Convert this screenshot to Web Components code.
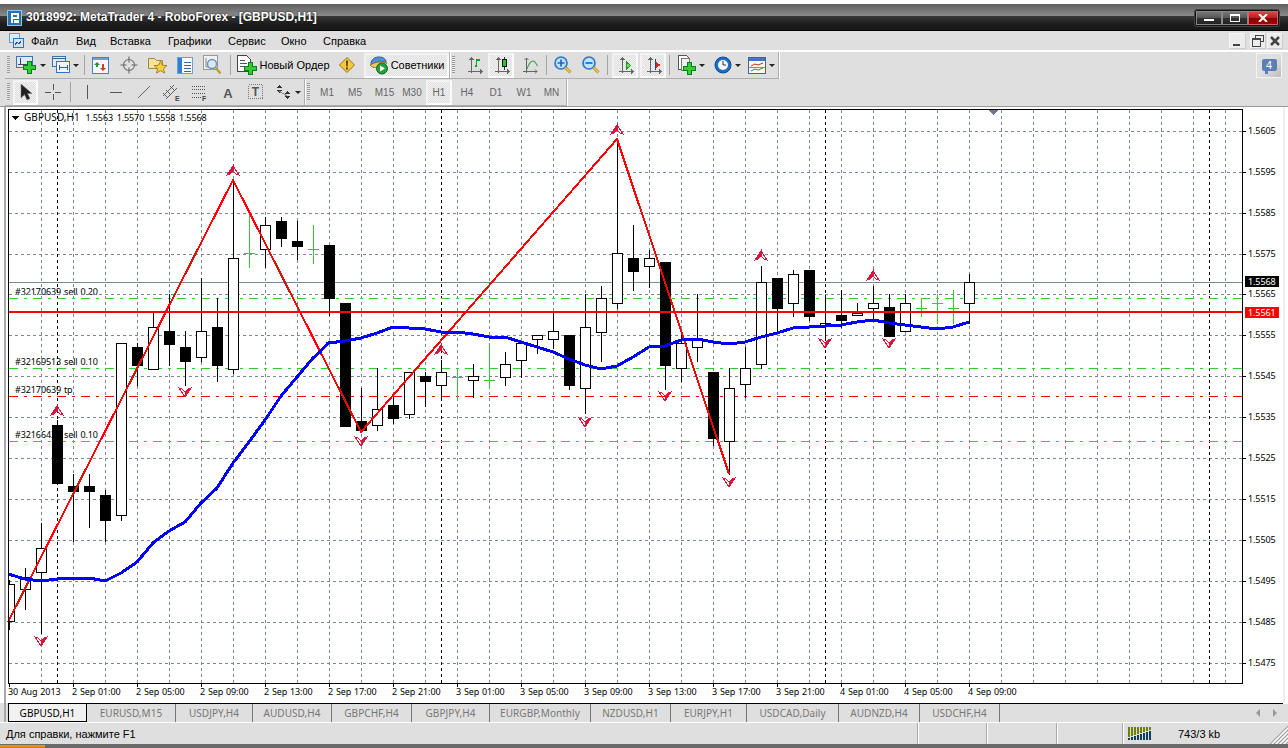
<!DOCTYPE html>
<html lang="ru"><head><meta charset="utf-8"><title>MetaTrader 4</title>
<style>
html,body{margin:0;padding:0;background:#fff;width:1288px;height:748px;overflow:hidden;font-family:"Liberation Sans",Arial,sans-serif;font-size:11px;color:#000}
</style></head><body>
<mt-window>
  <mt-titlebar>3018992: MetaTrader 4 - RoboForex - [GBPUSD,H1]</mt-titlebar>
  <mt-menubar>
    <mt-menu-item w="45">Файл</mt-menu-item><mt-menu-item w="34">Вид</mt-menu-item><mt-menu-item w="58">Вставка</mt-menu-item><mt-menu-item w="60">Графики</mt-menu-item><mt-menu-item w="53">Сервис</mt-menu-item><mt-menu-item w="42">Окно</mt-menu-item><mt-menu-item w="50">Справка</mt-menu-item>
  </mt-menubar>
  <mt-toolbar h="27">
    <mt-section w="445">
      <mt-grip w="7"></mt-grip>
      <mt-btn w="37" icon="newchart" arrow></mt-btn><mt-btn w="32" icon="profiles" arrow></mt-btn><mt-sep w="6"></mt-sep>
      <mt-btn w="27" icon="market"></mt-btn><mt-btn w="30" icon="cross"></mt-btn><mt-btn w="27" icon="nav"></mt-btn><mt-btn w="27" icon="term"></mt-btn><mt-btn w="29" icon="tester"></mt-btn><mt-sep w="6"></mt-sep>
      <mt-btn w="101" icon="order">Новый Ордер</mt-btn><mt-btn w="26" icon="alert"></mt-btn><mt-sep w="4" blank></mt-sep>
      <mt-btn w="85" icon="expert" pressed>Советники</mt-btn>
    </mt-section>
    <mt-section w="329">
      <mt-grip w="10"></mt-grip>
      <mt-btn w="27" icon="bars"></mt-btn><mt-sep w="1" blank></mt-sep><mt-btn w="26" icon="candles" pressed></mt-btn><mt-btn w="30" icon="line"></mt-btn><mt-sep w="4"></mt-sep>
      <mt-btn w="28" icon="zoomin"></mt-btn><mt-btn w="28" icon="zoomout"></mt-btn><mt-sep w="6"></mt-sep><mt-sep w="2" blank></mt-sep>
      <mt-btn w="26" icon="auto" pressed></mt-btn><mt-sep w="2" blank></mt-sep><mt-btn w="26" icon="shift" pressed></mt-btn><mt-sep w="6"></mt-sep>
      <mt-btn w="38" icon="tmpl" arrow></mt-btn><mt-btn w="34" icon="clock" arrow></mt-btn><mt-btn w="34" icon="indic" arrow></mt-btn>
    </mt-section>
    <mt-msg-button slot="end">4</mt-msg-button>
  </mt-toolbar>
  <mt-toolbar h="27">
    <mt-section w="300">
      <mt-grip w="7"></mt-grip><mt-sep w="1" blank></mt-sep>
      <mt-btn w="25" icon="cursor" pressed></mt-btn><mt-btn w="30" icon="thincross"></mt-btn><mt-sep w="4"></mt-sep>
      <mt-btn w="30" icon="vline"></mt-btn><mt-btn w="28" icon="hline"></mt-btn><mt-btn w="28" icon="tline"></mt-btn><mt-btn w="28" icon="chan"></mt-btn><mt-btn w="28" icon="fib"></mt-btn><mt-btn w="28" icon="atext"></mt-btn><mt-btn w="28" icon="ttext"></mt-btn><mt-btn w="34" icon="marks" arrow></mt-btn>
    </mt-section>
    <mt-section w="262" tf>
      <mt-grip w="9"></mt-grip>
      <mt-btn w="26" tf>M1</mt-btn><mt-btn w="30" tf>M5</mt-btn><mt-btn w="29" tf>M15</mt-btn><mt-btn w="26" tf>M30</mt-btn><mt-sep w="1" blank></mt-sep><mt-btn w="26" tf pressed>H1</mt-btn><mt-btn w="30" tf>H4</mt-btn><mt-btn w="28" tf>D1</mt-btn><mt-btn w="28" tf>W1</mt-btn><mt-btn w="27" tf>MN</mt-btn>
    </mt-section>
  </mt-toolbar>
  <mt-chart></mt-chart>
  <mt-tabs>
    <mt-tab w="79" active>GBPUSD,H1</mt-tab><mt-tab w="89">EURUSD,M15</mt-tab><mt-tab w="77">USDJPY,H4</mt-tab><mt-tab w="79">AUDUSD,H4</mt-tab><mt-tab w="80">GBPCHF,H4</mt-tab><mt-tab w="78">GBPJPY,H4</mt-tab><mt-tab w="101">EURGBP,Monthly</mt-tab><mt-tab w="80">NZDUSD,H1</mt-tab><mt-tab w="76">EURJPY,H1</mt-tab><mt-tab w="92">USDCAD,Daily</mt-tab><mt-tab w="81">AUDNZD,H4</mt-tab><mt-tab w="80">USDCHF,H4</mt-tab>
  </mt-tabs>
  <mt-status></mt-status>
</mt-window>
<script>
const plus=(x,y,s=12)=>{const a=s/3;return `<path d="M${x+a} ${y}h${a}v${a}h${a}v${a}h-${a}v${a}h-${a}v-${a}h-${a}v-${a}h${a}z" fill="#33cc33" stroke="#0c7d1c"/>`};
const axis=`<path d="M6.500 2v15M3 15.500h14M4.500 4l2-2 2 2M15 13.500l2 2-2 2" fill="none" stroke="#666"/>`;
const sv=(w,h,b,crisp)=>`<svg width="${w}" height="${h}" viewBox="0 0 ${w} ${h}" ${crisp?'shape-rendering="crispEdges"':''} style="display:block">${b}</svg>`;
const lens=(s)=>`<circle cx="9" cy="8" r="6" fill="#bfe0fb" stroke="#2a78c8" stroke-width="1.700"/><path d="M13.500 12.500l5 5" stroke="#b88a1e" stroke-width="3"/><path d="M13.500 12.500l5 5" stroke="#f2cf5e" stroke-width="1.200"/>${s}`;
const ICONS={
 newchart:sv(21,20,`<rect x=".5" y="1.500" width="16" height="11" fill="#dcebfa" stroke="#3a72b5"/><path d="M4 3v7M2 9.500h10" stroke="#445"/>`+plus(7.500,6.500,12),1),
 profiles:sv(18,18,`<rect x=".5" y=".5" width="13" height="10" fill="#dcebfa" stroke="#3a72b5"/><rect x="4.500" y="5.500" width="13" height="11" fill="#eef5fd" stroke="#3a72b5"/><path d="M.5 2.500h13M7 11.500h8M7 9v5M15 9v5" stroke="#406080"/>`,1),
 market:sv(17,17,`<rect x=".5" y=".5" width="16" height="16" fill="#f5f8fd" stroke="#4a7fc0"/><rect x="1" y="1" width="15" height="2" fill="#6f9fd8"/><path d="M5 5l3 3H6v2H4V8H2z" fill="#16a02a"/><path d="M11 14l3-3h-2V7h-2v4H8z" fill="#d04020"/>`),
 cross:sv(20,20,`<circle cx="10" cy="10" r="5.500" fill="none" stroke="#777" stroke-width="1.200"/><path d="M10 1.500v6M10 12.500v6M1.500 10h6M12.500 10h6" stroke="#666" stroke-width="1.100"/>`),
 nav:sv(20,20,`<path d="M.5 3.500h6l2 2h6v8h-14z" fill="#f6e39a" stroke="#a08a40"/><path d="M12.500 6l1.900 4.200 4.600.4-3.500 3 1.100 4.500-4.100-2.400-4 2.400 1.100-4.500-3.500-3 4.600-.4z" fill="#f5cf3e" stroke="#a8851c"/>`),
 term:sv(16,17,`<rect x=".5" y=".5" width="15" height="16" fill="#fff" stroke="#6f9fd0"/><rect x="1" y="1" width="4" height="15" fill="#2f7fd6"/><path d="M7 5h7M7 8h7M7 11h7M7 14h7" stroke="#3567a0"/>`,1),
 tester:sv(19,20,`<rect x=".5" y=".5" width="14" height="14" fill="#f1f1f1" stroke="#999"/><path d="M3 3v9h9" stroke="#888" fill="none"/><circle cx="9" cy="9" r="4.500" fill="#d9e8f5" stroke="#6a95bb" stroke-width="1.400"/><path d="M12.500 12.500l5 6" stroke="#c49a2a" stroke-width="2.300"/>`),
 order:sv(20,20,`<path d="M.5.5h9l4 4v12h-13z" fill="#fff" stroke="#444"/><path d="M3 5h5M3 8h7M3 11h4" stroke="#555"/>`+plus(7.500,7.500,12),1),
 alert:sv(16,16,`<path d="M8 .5L15.500 8 8 15.500.5 8z" fill="#f6c83c" stroke="#8f7320"/><path d="M7 3.500h2l-.3 6h-1.400z" fill="#5a3d00"/><rect x="7" y="10.500" width="2" height="2" fill="#5a3d00"/>`),
 expert:sv(20,20,`<path d="M2 9c0-5 4-7 8-7s7 2 7 5c-5-1-10 0-15 3z" fill="#4f8fd6" stroke="#26619f"/><path d="M1 10c5-3 12-4 17-2-2 2-3 3-7 4s-8 1-10-2z" fill="#f0c860" stroke="#987a20"/><circle cx="13" cy="13.500" r="5.500" fill="#22a03a" stroke="#0c6a1e"/><path d="M11 10.500v6l5-3z" fill="#fff"/>`),
 bars:sv(18,19,axis+`<path d="M11.500 11V4h3M11.500 10h-2" fill="none" stroke="#14a014" stroke-width="1.500"/>`,1),
 candles:sv(18,19,axis+`<path d="M12.500 1v13" stroke="#333"/><rect x="10.500" y="3.500" width="4" height="7" fill="#22cc22" stroke="#111"/>`,1),
 line:sv(18,19,axis+`<path d="M7 13c2-6 4-8 6-8s3 2 4.500 5" fill="none" stroke="#3f9a54" stroke-width="1.100"/>`),
 zoomin:sv(20,20,lens(`<path d="M5.500 8h7M9 4.500v7" stroke="#1f68b5" stroke-width="1.700"/>`)),
 zoomout:sv(20,20,lens(`<path d="M5.500 8h7" stroke="#1f68b5" stroke-width="1.700"/>`)),
 auto:sv(18,19,axis+`<path d="M10.500 6v7l4-3.500z" fill="#6fdc6f" stroke="#189a18"/>`,1),
 shift:sv(18,19,axis+`<path d="M11.500 3v11" stroke="#2040a0"/><path d="M17 9l-5-3v6z" fill="#d82818"/>`,1),
 tmpl:sv(18,20,`<path d="M.5.5h8l3 3v11H.5z" fill="#fff" stroke="#555"/><path d="M3.500 3.500h8v12h-8z" fill="#f0f0f0" stroke="#777"/>`+plus(5.500,7.500,12),1),
 clock:sv(18,18,`<circle cx="9" cy="9" r="8" fill="#1f6fc8" stroke="#0c4a90"/><circle cx="9" cy="9" r="5" fill="#f6fafe"/><path d="M9 5v4h3" stroke="#333" fill="none"/>`),
 indic:sv(18,17,`<rect x=".5" y=".5" width="17" height="16" fill="#fbf8ee" stroke="#3c68a0"/><rect x="1" y="1" width="16" height="3" fill="#3f78c0"/><path d="M3 9l4-2 3 1 5-2" stroke="#c03020" fill="none"/><path d="M3 14l4-2 3 1 5-2" stroke="#2a9a3a" fill="none"/><path d="M1 10.500h16" stroke="#88a"/>`),
 cursor:sv(14,18,`<path d="M2 1v14l3.500-3.500L8 17l3-1.500-2.500-5H13z" fill="#222" stroke="#777" stroke-width=".5"/>`),
 thincross:sv(20,20,`<path d="M10 2v6M10 12v6M2 10h6M12 10h6" stroke="#555"/>`,1),
 vline:sv(4,16,`<path d="M2 1v14" stroke="#555"/>`,1),
 hline:sv(14,4,`<path d="M1 2h12" stroke="#555"/>`,1),
 tline:sv(14,14,`<path d="M1 13L13 1" stroke="#666"/>`),
 chan:sv(20,20,`<path d="M1 14L12 3M4 17L15 6M1 11l5 5M4 8l5 5M8 4l5 5" stroke="#555" stroke-width=".9"/><text x="13" y="19" font-size="7" font-weight="bold" font-family="Liberation Sans" fill="#444">E</text>`),
 fib:sv(18,18,`<path d="M1 3h13M1 6h13M1 10h13" stroke="#555" stroke-dasharray="1 1"/><path d="M1 14h9" stroke="#555" stroke-dasharray="1 1"/><text x="11" y="18" font-size="7" font-weight="bold" font-family="Liberation Sans" fill="#444">F</text>`,1),
 atext:sv(14,14,`<text x="7" y="12.500" text-anchor="middle" font-size="13" font-weight="bold" font-family="Liberation Sans" fill="#555">A</text>`),
 ttext:sv(16,16,`<rect x=".5" y=".5" width="14" height="14" fill="none" stroke="#777" stroke-dasharray="1 1"/><text x="7.500" y="12" text-anchor="middle" font-size="12" font-weight="bold" font-family="Liberation Sans" fill="#555">T</text>`,1),
 marks:sv(18,16,`<path d="M5 1l3 3H2zM2 6h6L5 9zM13 7l3 3h-6zM10 12h6l-3 3z" fill="#333"/><path d="M5 7l8 5" stroke="#888"/>`,1),
};
function def(name,css,html,init){
  customElements.define(name,class extends HTMLElement{
    connectedCallback(){
      if(this.shadowRoot)return;
      const s=this.attachShadow({mode:'open'});
      s.innerHTML=`<style>${css}</style>${typeof html==='function'?html(this):html}`;
      if(init)init(this,s);
    }
  });
}
const wid=e=>{if(e.hasAttribute('w'))e.style.width=e.getAttribute('w')+'px'};
def('mt-window',`:host{display:flex;flex-direction:column;width:1288px;height:748px;background:#dfdfdf;position:relative}`,`<slot></slot>
<div style="height:4px;flex:none;background:#6a6a6a;position:relative"><div style="position:absolute;left:0;top:1px;bottom:0;width:45px;background:linear-gradient(#f09a2a,#d87808)"></div></div>`);
def('mt-titlebar',`:host{display:flex;flex:none;height:31px;box-sizing:border-box;border-top:4px solid #fff;background:linear-gradient(#5f5f5f 0,#8a8a8a 12px,#3a3a3a 12px,#1c1c1c 20px,#171717 26px,#000 26px);align-items:center;color:#fff;font-family:"Liberation Sans",sans-serif;font-weight:bold;font-size:12px;padding:0 9px 0 7px}
.t{flex:1;margin-left:4px;text-shadow:0 0 2px #000;white-space:nowrap;padding-bottom:1px}
.b{display:flex;height:14px;border:1px solid #111;border-radius:2px;box-shadow:0 0 0 1px #444}
.b div{display:flex;align-items:center;justify-content:center;height:14px;box-sizing:border-box;border:1px solid #888;width:26px;background:linear-gradient(#777 0,#555 50%,#333 50%,#222)}
.b .c{width:30px;background:linear-gradient(#d44 0,#b02020 50%,#8a0000 50%,#a00000);border-color:#c66}`,
`<svg width="15" height="16" viewBox="0 0 15 16" shape-rendering="crispEdges" style="flex:none"><rect width="15" height="16" fill="#8fc4ea"/><rect x="1" y="1" width="13" height="14" fill="#2a6fb0"/><path d="M4 3h8v6H6v4H4zM6 5v2h4V5z" fill="#fff" fill-rule="evenodd"/><rect x="7" y="10" width="5" height="3" fill="#fff"/></svg>
<div class="t"><slot></slot></div>
<div class="b"><div><svg width="10" height="8" shape-rendering="crispEdges"><rect x="0" y="5" width="10" height="2" fill="#fff"/></svg></div><div><svg width="10" height="8" shape-rendering="crispEdges"><rect x=".5" y=".5" width="9" height="7" fill="none" stroke="#fff"/><rect width="10" height="2" fill="#fff"/></svg></div><div class="c"><svg width="10" height="8"><path d="M1 0l8 8M9 0l-8 8" stroke="#fff" stroke-width="2"/></svg></div></div>`);
def('mt-menubar',`:host{display:flex;flex:none;height:21px;box-sizing:border-box;border-bottom:2px solid #fff;align-items:center;padding-left:9px;background:#dfdfdf}
.i{width:22px;flex:none;display:block;height:15px}.e{margin-left:auto;display:flex;gap:1px;padding-right:5px;align-self:flex-start;padding-top:2px}
.e div{width:16px;height:16px;background:#ececec;border:1px solid #f4f4f4;border-right-color:#ccc;border-bottom-color:#ccc;display:flex;align-items:center;justify-content:center;box-sizing:border-box}`,
`<div class="i"><svg width="15" height="15" shape-rendering="crispEdges"><rect x=".5" y=".5" width="10" height="9" fill="#dcebfa" stroke="#6c9ad0"/><rect x="4.500" y="5.500" width="10" height="9" fill="#cfe2f6" stroke="#3f6fb0"/><path d="M6 12l2-3 2 2 2-3" fill="none" stroke="#356"/></svg></div><slot></slot>
<div class="e"><div style="width:17px;margin-right:3px"><svg width="9" height="9" shape-rendering="crispEdges"><rect y="7" width="7" height="2" fill="#444"/></svg></div><div><svg width="12" height="12" shape-rendering="crispEdges"><path d="M3.500 3.500v-3h8v6h-3M.5 3.500h8v8h-8z" fill="none" stroke="#444"/><rect x="1" y="4" width="7" height="1" fill="#444"/></svg></div><div><svg width="10" height="10"><path d="M1 1l8 8M9 1l-8 8" stroke="#444" stroke-width="2.500"/></svg></div></div>`);
def('mt-menu-item',`:host{display:block;flex:none;white-space:nowrap;font-size:11px}`,`<slot></slot>`,wid);
def('mt-toolbar',`:host{display:flex;flex:none;box-sizing:border-box;padding-left:5px;align-items:stretch;background:#dfdfdf}.x{margin-left:auto;padding-right:6px;display:flex}`,`<slot></slot><div class="x"><slot name="end"></slot></div>`,e=>{e.style.height=e.getAttribute('h')+'px'});
def('mt-section',`:host{display:flex;flex:none;align-items:center;box-sizing:content-box;border-right:1px solid #b0b0b0;border-bottom:1px solid #aeaeae;box-shadow:1px 0 0 #fff,0 1px 0 #f4f4f4;height:calc(100% - 1px)}`,`<slot></slot>`,e=>{e.style.width=(+e.getAttribute('w')-1)+'px'});
def('mt-grip',`:host{display:flex;flex:none;height:100%;box-sizing:border-box;padding-left:2px;align-items:center}i{display:block;width:3px;height:18px;background:repeating-linear-gradient(#999 0 1px,#e8e8e8 1px 2px)}`,`<i></i>`,wid);
def('mt-sep',`:host{display:flex;flex:none;height:100%;justify-content:center;align-items:center}i{display:block;width:1px;height:20px;background:#a4a4a4}`,e=>e.hasAttribute('blank')?'':'<i></i>',wid);
def('mt-btn',`:host{display:flex;flex:none;align-items:center;justify-content:center;height:100%;white-space:nowrap;box-sizing:border-box;gap:2px;font-size:11px}
:host([pressed]){height:25px;background:repeating-conic-gradient(#f2f2f2 0 25%,#dedede 0 50%) 0 0/2px 2px;border:2px solid #f3f3f3;border-right-color:#fafafa;border-bottom-color:#fafafa}
:host([tf]){color:#666;font-size:10px;padding-top:1px}
.ar{width:0;height:0;border:3px solid transparent;border-top:3px solid #222;border-bottom:0;margin-left:1px}
.ic{flex:none;display:block}`,
e=>`${e.getAttribute('icon')?`<span class="ic">${ICONS[e.getAttribute('icon')]}</span>`:''}<slot></slot>${e.hasAttribute('arrow')?'<i class="ar"></i>':''}`,wid);
def('mt-msg-button',`:host{display:flex;align-items:center;justify-content:center;width:26px;height:25px;align-self:center;box-sizing:border-box;border:1px solid #f4f4f4;border-right-color:#f4f4f4;background:linear-gradient(135deg,#dfdfdf 50%,#bdbdbd);position:relative}
b{position:relative;display:block;width:15px;height:12px;background:#5b7fb4;color:#fff;text-align:center;font-size:11px;font-weight:normal;line-height:12px;margin-bottom:2px;border-radius:2px}
b::after{content:"";position:absolute;left:3px;top:12px;border:3px solid transparent;border-top:3px solid #5b7fb4;border-left:3px solid #5b7fb4;border-right:0;border-bottom:0}`,`<b><slot></slot></b>`);
def('mt-tabs',`:host{display:flex;flex:none;height:20px;box-sizing:border-box;padding-left:8px;border-top:1px solid #000;border-bottom:1px solid #fff;background:#dfdfdf;position:relative}
.g{position:absolute;left:4px;top:-1px;bottom:0;width:2px;background:#a8a8a8}
.w{position:absolute;left:0;top:-1px;width:8px;height:1px;background:#dfdfdf}
.e{position:absolute;right:0;top:-1px;width:5px;height:1px;background:#fff}
.n{position:absolute;right:0;top:0;width:40px;height:18px}`,`<div class="w"></div><div class="e"></div><div class="g"></div><slot></slot><svg class="n" width="40" height="18"><path d="M12 5v8l-4-4z" fill="#999"/><path d="M24 5v8l4-4z" transform="translate(1,0)" fill="#999"/></svg>`);
def('mt-tab',`:host{display:flex;flex:none;height:18px;align-items:center;justify-content:center;box-sizing:border-box;font-family:"Noto Sans",sans-serif;font-size:10px;letter-spacing:.05px;color:#777;border-right:1px solid #777;white-space:nowrap}
:host([active]){color:#000;background:#f1f1f1;border:1px solid #000;border-top:none}
span{display:block}`,`<span><slot></slot></span>`,e=>{wid(e)});
def('mt-status',`:host{display:flex;flex:none;height:21px;background:#dfdfdf;align-items:stretch;font-size:11px;position:relative}
.c{border-right:1px solid #a9a9a9;box-shadow:1px 0 0 #fff;flex:none;display:flex;align-items:center;box-sizing:border-box}
.k{display:flex;align-items:center;padding-left:5px;gap:26px}.gr{position:absolute;right:0;bottom:0}`,
`<div class="c" style="width:918px;padding-left:6px">Для справки, нажмите F1</div><div class="c" style="width:69px"></div><div class="c" style="width:70px"></div><div class="c" style="width:66px"></div>
<div class="k"><svg id="tr" width="24" height="13" shape-rendering="crispEdges"></svg><span>743/3 kb</span></div>
<svg class="gr" width="18" height="18"><path d="M18 0L0 18M18 4L4 18M18 8L8 18M18 12L12 18M18 16L16 18" stroke="#9a9a9a" stroke-width="1"/><path d="M18 2L2 18M18 6L6 18M18 10L10 18M18 14L14 18" stroke="#fff" stroke-width="1"/></svg>`,
(e,s)=>{let h='';for(let i=0;i<8;i++){const b=2+Math.round(i*.95),x=i*3;h+=`<rect x="${x}" y="${13-b}" width="2" height="${b}" fill="#0d3f5f"/><rect x="${x}" y="0" width="2" height="${13-b-1}" fill="#6f8000"/>`}s.getElementById('tr').innerHTML=h});

/* ---- chart ---- */
const C=[
[9,580,584,621,629,'w'],[25,568,577,589,609,'w'],[41,523,548,572,633,'w'],[57,420,425,483,483,'b'],[73,474,486,491,541,'b'],[89,474,486,491,527,'b'],[105,490,495,520,541,'b'],[121,343,343,515,520,'w'],[137,343,347,365,385,'b'],[153,313,327,369,369,'w'],[169,294,331,344,365,'b'],[185,331,347,361,385,'b'],[201,278,331,357,361,'w'],[217,298,327,365,381,'b'],[233,180,258,369,373,'w'],[249,210,253,253,267,'g'],[265,217,225,249,267,'w'],[281,217,221,238,246,'b'],[297,221,241,246,259,'b'],[313,225,249,249,263,'g'],[329,245,245,298,315,'b'],[345,303,303,426,426,'b'],[361,388,421,430,430,'b'],[377,368,409,425,430,'w'],[393,397,405,418,423,'b'],[409,372,372,414,418,'w'],[425,372,376,381,406,'b'],[441,360,372,385,400,'w'],[457,368,377,377,397,'g'],[473,364,376,380,397,'w'],[489,343,380,380,388,'g'],[505,352,364,377,385,'w'],[521,343,343,360,377,'w'],[537,335,335,339,353,'w'],[553,313,331,339,348,'w'],[569,335,335,385,389,'b'],[585,294,327,388,413,'w'],[601,286,298,332,361,'w'],[617,139,253,303,308,'w'],[633,225,258,271,290,'b'],[649,250,258,266,287,'w'],[665,262,262,365,389,'b'],[681,335,343,368,381,'w'],[697,294,339,347,361,'w'],[713,372,372,438,445,'b'],[729,368,388,441,474,'w'],[745,347,368,384,397,'w'],[761,266,282,364,368,'w'],[777,278,278,308,332,'b'],[793,270,274,303,316,'w'],[809,270,270,316,320,'b'],[825,295,323,326,338,'w'],[841,290,315,320,327,'b'],[857,303,313,315,315,'w'],[873,286,303,308,320,'w'],[889,294,307,336,336,'b'],[905,294,303,331,331,'w'],[921,298,308,308,316,'g'],[937,294,303,303,323,'g'],[953,290,308,308,323,'g'],[969,274,282,303,323,'w']];
const BLUE="8,574 25,579 41,581 57,579 73,578 89,578 105,581 121,573 137,562 153,543 169,531 185,522 201,503 217,488 233,463 249,442 265,420 281,396 297,377 313,358 320,352 328,343 345,341 361,338 377,333 393,327 409,328 425,329 441,332 457,332 473,334 489,337 505,337 521,342 537,347 553,352 569,359 585,365 601,369 617,366 633,357 649,347 665,346 681,340 697,339 713,342 729,344 745,342 761,337 777,333 793,328 809,327 825,326 841,325 857,322 873,320 889,323 905,325 921,327 937,329 953,327 969,322";
const RED="8,622 233,180 361,432 617,139 729,474";
const GRIDY=[131,172,213,254,294,335,376,417,458,499,540,581,622,663];
const PRICES=['1.5605','1.5595','1.5585','1.5575','1.5565','1.5555','1.5545','1.5535','1.5525','1.5515','1.5505','1.5495','1.5485','1.5475'];
const TIMES=['2 Sep 01:00','2 Sep 05:00','2 Sep 09:00','2 Sep 13:00','2 Sep 17:00','2 Sep 21:00','3 Sep 01:00','3 Sep 05:00','3 Sep 09:00','3 Sep 13:00','3 Sep 17:00','3 Sep 21:00','4 Sep 01:00','4 Sep 05:00','4 Sep 09:00'];
const UP=[[57,411],[233,171],[441,350],[617,130],[761,256],[873,276]], DN=[[41,641],[185,392],[361,441],[585,422],[665,396],[825,343],[889,343],[729,482]];
const ORDERS=[[292,'#32170639 sell 0.20'],[362,'#32169513 sell 0.10'],[390,'#32170639 tp'],[435,'#32166439 sell 0.10']];
def('mt-chart',`:host{display:block;flex:none;height:597px;position:relative;background:#fff;overflow:hidden;border-top:1px solid #9a9a9a;box-sizing:border-box;font-family:"Noto Sans",sans-serif;font-size:9px;letter-spacing:-.1px;word-spacing:.6px}
svg{position:absolute;left:0;top:-1px;display:block}
.l{position:absolute;white-space:nowrap;line-height:12px}
.hd{word-spacing:1.4px}.hd b{font-weight:normal;font-size:10px;letter-spacing:.05px;margin-right:2px}
.box{color:#fff;left:1245px;width:34px;height:11px;line-height:11px;box-sizing:border-box;padding-left:3px}`,
`<div id="t"></div><svg id="s" width="1288" height="597" viewBox="0 106 1288 597" shape-rendering="crispEdges"></svg><div id="p"></div>`,
(e,s)=>{
 const R=(x,y,w,h,f)=>`<rect x="${x}" y="${y}" width="${w}" height="${h}" fill="${f}"/>`;
 let o='';
 o+=R(4,106,2,597,'#a8a8a8')+R(1283,106,2,597,'#efefef');
 const GC='#778899';
 const L=(x1,y1,x2,y2,c,d)=>`<line x1="${x1}" y1="${y1}" x2="${x2}" y2="${y2}" stroke="${c}" ${d?`stroke-dasharray="${d}"`:''}/>`;
 for(let x=41;x<1243;x+=32)o+=L(x+.5,110,x+.5,683,GC,'3 3');
 for(const y of GRIDY)o+=L(9,y+.5,1242,y+.5,GC,'3 3');
 for(const x of [57,441,825,1209])o+=L(x+.5,110,x+.5,683,'#000','3 3');
 o+=L(9,282.5,1242,282.5,GC);
 o+=L(9,298.5,1242,298.5,'#32cd32','9 6 3 6')+L(9,368.5,1242,368.5,'#32cd32','9 6 3 6')+L(9,441.5,1242,441.5,'#32cd32','9 6 3 6');
 o+=L(9,396.5,1242,396.5,'#ff0000','9 6 3 6');
 for(const [x,h,t,b,l,k] of C){
  if(k==='g'){o+=R(x,h,1,l-h+1,'#32cd32')+R(x-5,t,11,1,'#32cd32');continue}
  o+=R(x,h,1,l-h+1,'#000');
  const x0=Math.max(9,x-5),w=x+6-x0;
  o+=R(x0,t,w,b-t+1,'#000');
  if(k==='w')o+=R(x0+(x0>x-5?0:1),t+1,w-(x0>x-5?1:2),b-t-1,'#fff');
 }
 o+=R(9,311,1233,2,'#ff0000');
 o+=`<polyline points="${RED}" fill="none" stroke="#ff0000" stroke-width="2" stroke-linejoin="round"/>`;
 o+=`<polyline points="${BLUE}" fill="none" stroke="#0000ff" stroke-width="3" stroke-linejoin="round"/>`;
 const AC='#dc143c';
 for(const [x,y] of UP)o+=`<g transform="translate(${x},${y})"><path d="M0-5L-6 4l3-1 3-3z" fill="${AC}" stroke="${AC}"/><path d="M0-5L6 4 3 3 0 0" fill="none" stroke="${AC}"/></g>`;
 for(const [x,y] of DN)o+=`<g transform="translate(${x},${y})"><path d="M0 5L6-4 3-3 0 0z" fill="${AC}" stroke="${AC}"/><path d="M0 5L-6-4l3 1 3 3" fill="none" stroke="${AC}"/></g>`;
 o+=R(8,109,1235,1,'#000')+R(8,109,1,575,'#000')+R(1242,109,1,575,'#000')+R(8,683,1235,1,'#000');
 for(const y of GRIDY)o+=R(1243,y,3,1,'#000');
 o+=R(9,684,1,3,'#000');for(let x=73;x<1000;x+=64)o+=R(x,684,1,3,'#000');
 o+=`<path d="M988 110h11l-5.500 5z" fill="#6a7a90"/>`;
 o+=`<path d="M12 116h7l-3.500 4z" fill="#000"/>`;
 s.getElementById('s').innerHTML=o;
 const Y=y=>y-106-1-6;
 let t='';
 for(const [y,x] of ORDERS)t+=`<div class="l" style="left:15px;top:${Y(y)}px">${x}</div>`;
 s.getElementById('t').innerHTML=t;
 let p=`<div class="l hd" style="left:24px;top:${Y(117)}px"><b>GBPUSD,H1</b> 1.5563 1.5570 1.5558 1.5568</div>`;
 GRIDY.forEach((y,i)=>p+=`<div class="l" style="left:1248px;top:${Y(y)}px">${PRICES[i]}</div>`);
 p+=`<div class="l box" style="top:${276-107}px;background:#000">1.5568</div><div class="l box" style="top:${307-107}px;background:#f00">1.5561</div>`;
 p+=`<div class="l" style="left:8px;top:${Y(692)}px">30 Aug 2013</div>`;
 TIMES.forEach((v,i)=>p+=`<div class="l" style="left:${72+64*i}px;top:${Y(692)}px">${v}</div>`);
 s.getElementById('p').innerHTML=p;
});
</script>
</body></html>
